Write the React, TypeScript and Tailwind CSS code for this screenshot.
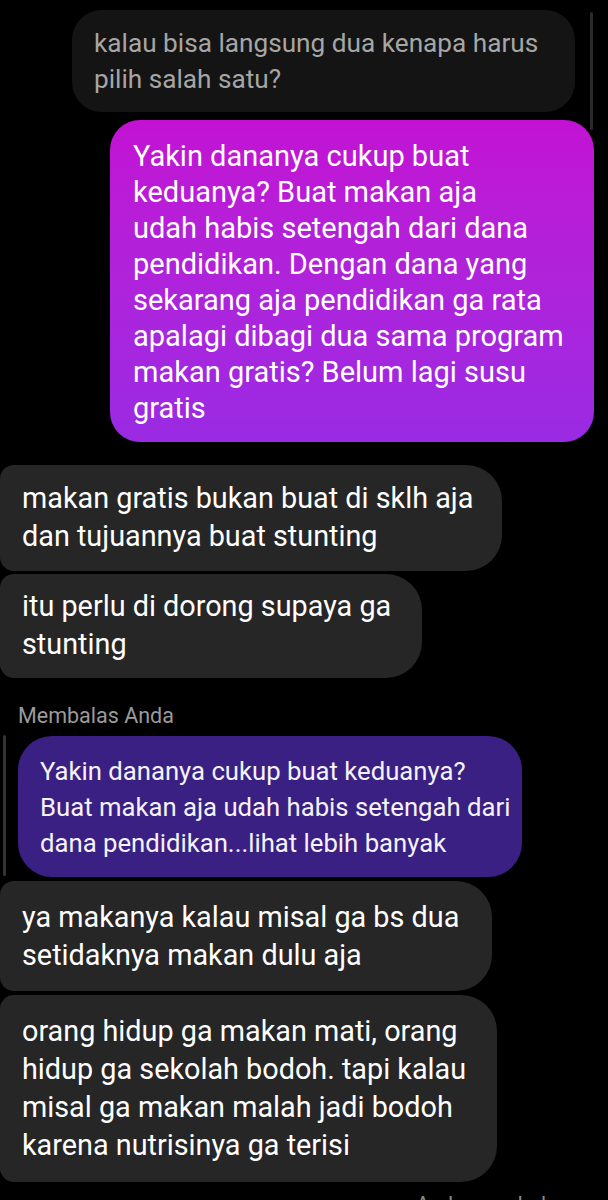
import React from "react";

const font = { fontFamily: "Roboto, 'Noto Sans', sans-serif" };

export default function App() {
  return (
    <div className="relative w-[608px] h-[1200px] overflow-hidden bg-black" style={font}>
      <div className="absolute left-[590px] top-[12px] w-[3px] h-[118px] bg-[#2a2a2a] rounded-full" />
      <div className="absolute left-[3px] top-[735px] w-[3px] h-[141px] bg-[#333333] rounded-full" />

      <div className="flex flex-col pt-[10px]">
        <div className="ml-[72px] w-[503px] rounded-[30px] bg-[#141414] px-[22px] pt-[15px] pb-[15px] text-[26.2px] leading-[36px] text-[#a6a6a6] whitespace-nowrap">
          kalau bisa langsung dua kenapa harus
          <br />
          pilih salah satu?
        </div>

        <div className="mt-[8px] ml-[110px] w-[484px] rounded-[30px] bg-gradient-to-b from-[#c311d3] to-[#9a2ae3] pl-[23px] pr-[10px] pt-[18px] pb-[16px] text-[29px] leading-[36px] text-white whitespace-nowrap">
          Yakin dananya cukup buat
          <br />
          keduanya? Buat makan aja
          <br />
          udah habis setengah dari dana
          <br />
          pendidikan. Dengan dana yang
          <br />
          sekarang aja pendidikan ga rata
          <br />
          apalagi dibagi dua sama program
          <br />
          makan gratis? Belum lagi susu
          <br />
          gratis
        </div>

        <div className="mt-[23px] w-[502px] rounded-l-[14px] rounded-r-[36px] bg-[#262626] px-[22px] pt-[14px] pb-[16px] text-[28.8px] leading-[38px] text-white whitespace-nowrap">
          makan gratis bukan buat di sklh aja
          <br />
          dan tujuannya buat stunting
        </div>
        <div className="mt-[3px] w-[422px] rounded-l-[14px] rounded-r-[36px] bg-[#262626] px-[22px] pt-[13px] pb-[15px] text-[28.8px] leading-[38px] text-white whitespace-nowrap">
          itu perlu di dorong supaya ga
          <br />
          stunting
        </div>

        <div className="mt-[26px] pl-[18px] text-[21.5px] leading-[24px] text-[#9b9b9b]">Membalas Anda</div>

        <div className="mt-[8px] ml-[18px] w-[504px] rounded-[34px] bg-[#3b2083] px-[22px] pt-[17px] pb-[16px] text-[25.7px] leading-[36px] text-[#f4f2fa] whitespace-nowrap">
          Yakin dananya cukup buat keduanya?
          <br />
          Buat makan aja udah habis setengah dari
          <br />
          dana pendidikan...lihat lebih banyak
        </div>

        <div className="mt-[4px] w-[492px] rounded-l-[14px] rounded-r-[36px] bg-[#262626] px-[22px] pt-[17px] pb-[17px] text-[28.8px] leading-[38px] text-white whitespace-nowrap">
          ya makanya kalau misal ga bs dua
          <br />
          setidaknya makan dulu aja
        </div>
        <div className="mt-[4px] w-[497px] rounded-l-[14px] rounded-r-[36px] bg-[#262626] px-[22px] pt-[17px] pb-[18px] text-[28.8px] leading-[38px] text-white whitespace-nowrap">
          orang hidup ga makan mati, orang
          <br />
          hidup ga sekolah bodoh. tapi kalau
          <br />
          misal ga makan malah jadi bodoh
          <br />
          karena nutrisinya ga terisi
        </div>

        <div className="mt-[10px] pl-[416px] text-[21px] leading-[24px] text-[#8a8a8a]">Anda membalas</div>
      </div>
    </div>
  );
}
